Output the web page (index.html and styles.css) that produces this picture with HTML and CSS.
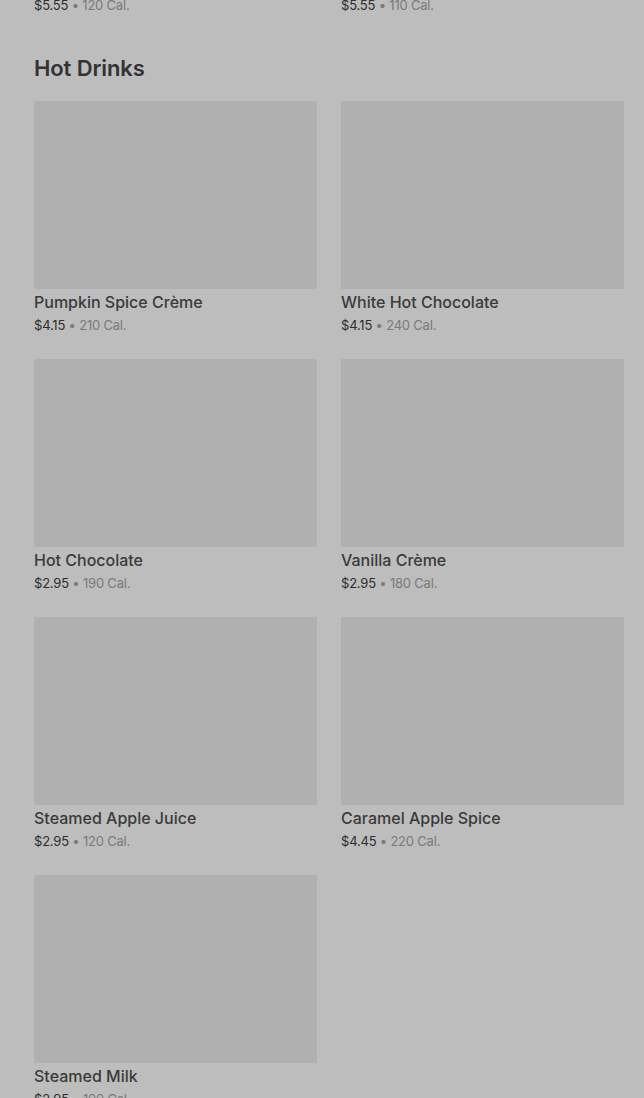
FILE: index.html
```html
<!DOCTYPE html>
<html>
<head>
<title>Menu</title>
<link rel="stylesheet" href="styles.css">
</head>
<body>
<div class="menu">
<div class="grid prev">
<p class="price">$5.55 <span class="cal">• 120 Cal.</span></p>
<p class="price">$5.55 <span class="cal">• 110 Cal.</span></p>
</div>

<h2 class="section-title">Hot Drinks</h2>
<div class="grid">
<div class="item">
<div class="thumb"></div>
<p class="name">Pumpkin Spice Crème</p>
<p class="price">$4.15 <span class="cal">• 210 Cal.</span></p>
</div>
<div class="item">
<div class="thumb"></div>
<p class="name">White Hot Chocolate</p>
<p class="price">$4.15 <span class="cal">• 240 Cal.</span></p>
</div>
<div class="item">
<div class="thumb"></div>
<p class="name">Hot Chocolate</p>
<p class="price">$2.95 <span class="cal">• 190 Cal.</span></p>
</div>
<div class="item">
<div class="thumb"></div>
<p class="name">Vanilla Crème</p>
<p class="price">$2.95 <span class="cal">• 180 Cal.</span></p>
</div>
<div class="item">
<div class="thumb"></div>
<p class="name">Steamed Apple Juice</p>
<p class="price">$2.95 <span class="cal">• 120 Cal.</span></p>
</div>
<div class="item">
<div class="thumb"></div>
<p class="name">Caramel Apple Spice</p>
<p class="price">$4.45 <span class="cal">• 220 Cal.</span></p>
</div>
<div class="item">
<div class="thumb"></div>
<p class="name">Steamed Milk</p>
<p class="price">$2.95 <span class="cal">• 100 Cal.</span></p>
</div>
</div>
</div>
</body>
</html>
```

FILE: styles.css
```css
body{
margin:0;
background-color:#bdbdbd;
font-family:Inter, "Noto Sans", sans-serif;
overflow:hidden;
}
.menu{
padding:0 20px 0 34px;
}
.grid{
display:grid;
grid-template-columns:repeat(2,1fr);
column-gap:24px;
row-gap:25px;
}
.prev{
margin-top:-4px;
}
.section-title{
margin:38px 0 17px;
font-size:22px;
line-height:32px;
font-weight:600;
color:#333;
letter-spacing:-0.1px;
}
.thumb{
height:188px;
background-color:#b0b0b0;
}
.name{
margin:3px 0 0;
font-size:16px;
line-height:20px;
font-weight:500;
color:#3a3a3a;
}
.price{
margin:4px 0 0;
font-size:13px;
line-height:18px;
color:#2e2e2e;
letter-spacing:-0.2px;
}
.prev .price{
margin:0;
}
.cal{
color:#7a7a7a;
}
```
